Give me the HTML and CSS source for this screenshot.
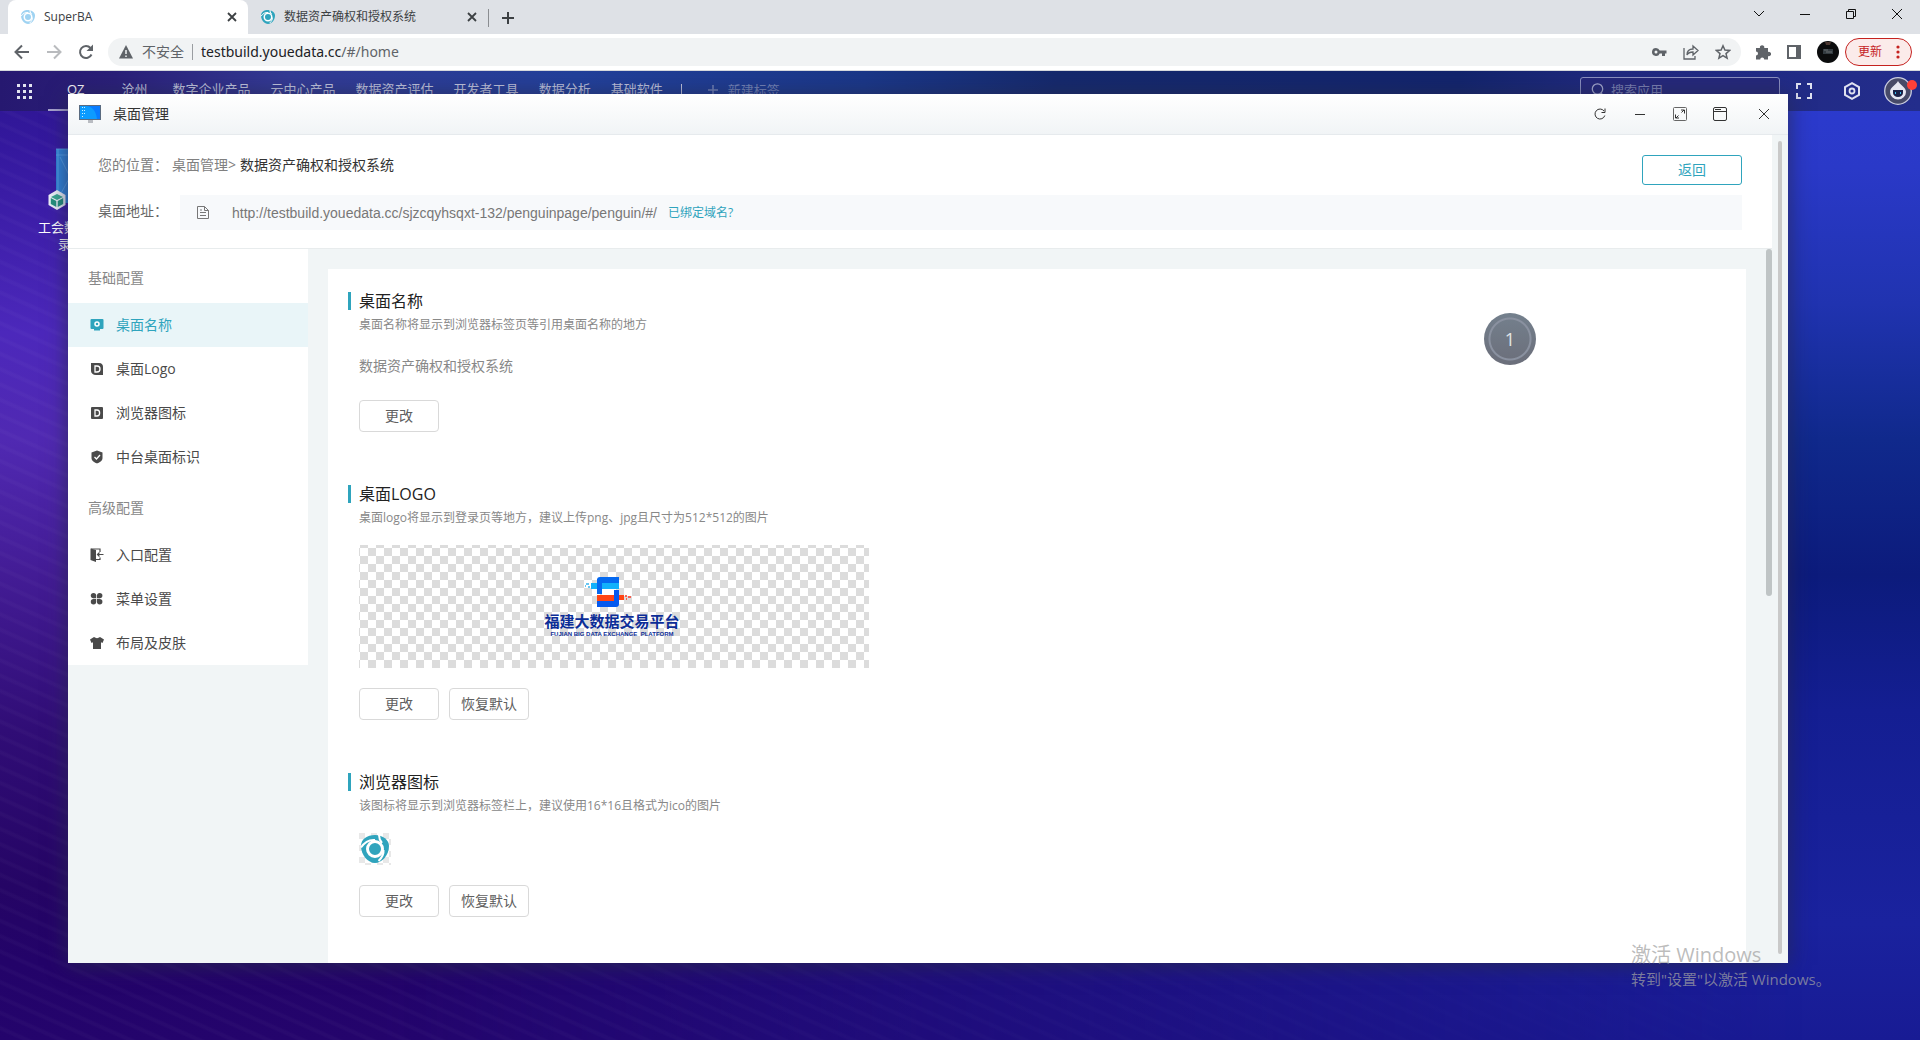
FILE: index.html
```html
<!DOCTYPE html>
<html lang="zh-CN">
<head>
<meta charset="utf-8">
<title>SuperBA</title>
<meta name="viewport" content="width=device-width, initial-scale=1">
<link rel="stylesheet" href="styles.css">
</head>
<body>
<svg class="defs" aria-hidden="true">
  <symbol id="swirl" viewBox="0 0 32 32">
    <path d="M16 2C8 2 2 6 2 13c0 9 7 17 14 17s14-8 14-17C30 7 24 2 16 2z" fill="currentColor"/>
    <path d="M2 14.500c4-6 9-8 14-7.500M20 2c0 3 .5 5 3 8M24.500 17c.5 4-1 7-5 11" fill="none" stroke="#fff" stroke-width="2"/>
    <circle cx="16" cy="16" r="7.500" fill="none" stroke="#fff" stroke-width="3"/>
  </symbol>
  <symbol id="cross" viewBox="0 0 12 12"><path d="M1 1l10 10M11 1L1 11" fill="none" stroke="currentColor"/></symbol>
  <symbol id="cross-bold" viewBox="0 0 10 10"><path d="M1 1l8 8M9 1L1 9" fill="none" stroke="currentColor" stroke-width="1.800"/></symbol>
</svg>

<header class="browser">
  <div class="tabs">
    <div class="tab tab-active">
      <svg class="fav fav-pale"><use href="#swirl"/></svg>
      <span class="tab-title">SuperBA</span>
      <button class="bare tab-close" aria-label="关闭标签页"><svg width="10" height="10"><use href="#cross-bold"/></svg></button>
    </div>
    <div class="tab">
      <svg class="fav"><use href="#swirl"/></svg>
      <span class="tab-title">数据资产确权和授权系统</span>
      <button class="bare tab-close" aria-label="关闭标签页"><svg width="10" height="10"><use href="#cross-bold"/></svg></button>
    </div>
    <button class="bare new-tab" aria-label="新标签页"><svg width="12" height="12" viewBox="0 0 12 12"><path d="M6 0v12M0 6h12" stroke="currentColor" stroke-width="2"/></svg></button>
    <div class="win-controls">
      <button class="bare" aria-label="标签页搜索"><svg width="12" height="12" viewBox="0 0 12 12"><path d="M1 3l5 5 5-5" fill="none" stroke="currentColor"/></svg></button>
      <button class="bare" aria-label="最小化"><svg width="10" height="10" viewBox="0 0 10 10"><path d="M0 5.500h10" stroke="currentColor"/></svg></button>
      <button class="bare" aria-label="还原"><svg width="10" height="10" viewBox="0 0 10 10"><path d="M.5 2.500h7v7h-7zM2.500 2.500v-2h7v7h-2" fill="none" stroke="currentColor"/></svg></button>
      <button class="bare" aria-label="关闭"><svg width="12" height="12"><use href="#cross"/></svg></button>
    </div>
  </div>
  <div class="toolbar">
    <button class="bare tool" aria-label="后退"><svg width="16" height="16" viewBox="0 0 16 16"><path d="M15 8H2M8 1.500L1.500 8 8 14.500" fill="none" stroke="currentColor" stroke-width="2"/></svg></button>
    <button class="bare tool tool-off" aria-label="前进"><svg width="16" height="16" viewBox="0 0 16 16"><path d="M1 8h13M8 1.500L14.500 8 8 14.500" fill="none" stroke="currentColor" stroke-width="2"/></svg></button>
    <button class="bare tool" aria-label="重新加载"><svg width="16" height="16" viewBox="0 0 16 16"><path d="M13.500 10.500A6 6 0 1 1 12.500 4" fill="none" stroke="currentColor" stroke-width="2"/><path d="M15 .5V7H8.500z" fill="currentColor"/></svg></button>
    <div class="omnibox">
      <svg width="14" height="14" viewBox="0 0 14 14"><path d="M7 0l7 13.500H0z" fill="#5f6368"/><path d="M7 5v4M7 10.500v1.500" stroke="#f1f3f4" stroke-width="1.500"/></svg>
      <span class="insecure">不安全</span>
      <div class="url" role="textbox" aria-label="地址栏">testbuild.youedata.cc<span>/#/home</span></div>
      <button class="bare omni-btn" aria-label="密码"><svg width="16" height="16" viewBox="0 0 16 16"><path d="M5 4a4 4 0 1 0 3.700 5.500H11V12h3V9.500h1.500v-3H8.700A4 4 0 0 0 5 4zm0 2.500a1.500 1.500 0 1 1 0 3 1.500 1.500 0 0 1 0-3z" fill="currentColor"/></svg></button>
      <button class="bare omni-btn" aria-label="分享"><svg width="16" height="16" viewBox="0 0 16 16"><path d="M1 4v11h11v-3M4 11c0-4 2.500-6 6-6V2l5 4.500L10 11V8c-3 0-5 1-6 3z" fill="none" stroke="currentColor" stroke-width="1.300"/></svg></button>
      <button class="bare omni-btn" aria-label="收藏"><svg width="16" height="16" viewBox="0 0 16 16"><path d="M8 1.800l1.900 4.300 4.700.4-3.600 3.100 1.100 4.600L8 11.700l-4.100 2.500L5 9.600 1.400 6.500l4.700-.4z" fill="none" stroke="currentColor" stroke-width="1.500"/></svg></button>
    </div>
    <div class="ext">
      <button class="bare" aria-label="扩展程序"><svg width="16" height="16" viewBox="0 0 16 16"><path d="M1 4h4a2.200 2.200 0 1 1 4.200 0H13v4a2.200 2.200 0 1 1 0 4v3.500H9.200a2 2 0 1 0-4 0H1v-4a2 2 0 1 0 0-4z" fill="currentColor"/></svg></button>
      <button class="bare" aria-label="侧边栏"><svg width="14" height="14" viewBox="0 0 14 14"><path d="M1 1h12v12H1z" fill="none" stroke="currentColor" stroke-width="2"/><path d="M9 0h5v14H9z" fill="currentColor"/></svg></button>
      <button class="bare" aria-label="个人资料"><svg width="22" height="22" viewBox="0 0 22 22"><circle cx="11" cy="11" r="11" fill="#0b0c0d"/><path d="M8 1h6l-1 3H9z" fill="#4a3630"/><path d="M6 8h10v5H6z" fill="#333b40"/><path d="M7 9h4M9 11h6" stroke="#6a6f70"/></svg></button>
      <button class="update">更新<svg width="4" height="14" viewBox="0 0 4 14"><circle cx="2" cy="2" r="1.600"/><circle cx="2" cy="7" r="1.600"/><circle cx="2" cy="12" r="1.600"/></svg></button>
    </div>
  </div>
</header>

<main class="desktop">
  <header class="appbar">
    <button class="bare apps" aria-label="全部应用"><svg width="15" height="15" viewBox="0 0 15 15"><path d="M0 0h3v3H0zM6 0h3v3H6zM12 0h3v3h-3zM0 6h3v3H0zM6 6h3v3H6zM12 6h3v3h-3zM0 12h3v3H0zM6 12h3v3H6zM12 12h3v3h-3z" fill="#e3e4f0"/></svg></button>
    <nav class="appnav">
      <a class="current" href="#">OZ</a>
      <a href="#">沧州</a>
      <a href="#">数字企业产品</a>
      <a href="#">云中心产品</a>
      <a href="#">数据资产评估</a>
      <a href="#">开发者工具</a>
      <a href="#">数据分析</a>
      <a href="#">基础软件</a>
      <button class="bare add-tag"><svg width="10" height="10" viewBox="0 0 10 10"><path d="M5 0v10M0 5h10" stroke="currentColor" stroke-width="1.500"/></svg>新建标签</button>
    </nav>
    <label class="search">
      <svg width="13" height="14" viewBox="0 0 13 14"><circle cx="6.500" cy="6" r="5.200" fill="none" stroke="#a9aed2" stroke-width="1.300"/><path d="M10 10l2.500 3" stroke="#a9aed2" stroke-width="1.300"/></svg>
      <input type="text" placeholder="搜索应用" aria-label="搜索应用">
    </label>
    <div class="appicons">
      <button class="bare" aria-label="全屏"><svg width="16" height="16" viewBox="0 0 16 16"><path d="M1 6V1h4M11 1h4v5M15 10v5h-4M5 15H1v-5" fill="none" stroke="currentColor" stroke-width="2"/></svg></button>
      <button class="bare" aria-label="设置"><svg width="18" height="18" viewBox="0 0 18 18"><path d="M9 1.200l7 3.900v7.800l-7 3.900-7-3.900V5.100z" fill="none" stroke="currentColor" stroke-width="2"/><circle cx="9" cy="9" r="2.500" fill="none" stroke="currentColor" stroke-width="1.800"/></svg></button>
      <button class="bare avatar" aria-label="用户"><svg width="28" height="28" viewBox="0 0 28 28"><circle cx="14" cy="14" r="13.300" fill="#474a68" stroke="#c9cce0" stroke-width="1.300"/><path d="M14 4c2 4 8 6 8 11a8 7.500 0 0 1-16 0C6 10 12 8 14 4z" fill="#e6e7f2"/><path d="M9 13h10v3a5 4 0 0 1-10 0z" fill="#1a2148"/><path d="M11.500 15v2M16.500 15v2" stroke="#36b8e8"/></svg></button>
    </div>
  </header>

  <a class="shortcut" href="#">
    <svg width="60" height="64" viewBox="0 0 60 64"><path d="M14 2h44v54H14z" fill="#2f83d8"/><path d="M14 2h44M16 2v54M14 8h44M18 10l10 20-10 18" fill="none" stroke="#5aa5e8" stroke-width=".8"/><path d="M15 43l8.500 5v10L15 63l-8.500-5V48z" fill="#edf1f8"/><path d="M15 47l6 3-6 3-6-3z" fill="#3aa890"/><path d="M8.800 51l5.500 3v6l-5.500-3zM21.200 51l-5.500 3v6l5.500-3z" fill="#25917c"/></svg>
    <span>工会数</span>
    <span class="second">录</span>
  </a>

  <section class="window">
    <header class="titlebar">
      <svg width="22" height="18" viewBox="0 0 22 18"><path d="M9 14h5v4H9z" fill="#b9bcc2"/><path d="M0 0h22v15H0z" fill="#5a6b80"/><path d="M1 1h20v13H1z" fill="#087bff"/><path d="M1 1h6c6 0 10 5 11 13H1z" fill="#0c9bff"/><path d="M3 2h1v1H3zM5 2h1v1H5zM3 5h1v1H3zM5 5h1v1H5zM3 8h1v1H3zM5 8h1v1H5zM3 11h1v1H3z" fill="#c8f1ff"/></svg>
      <h1>桌面管理</h1>
      <button class="bare" aria-label="刷新"><svg width="12" height="12" viewBox="0 0 12 12"><path d="M10.800 7.500A5 5 0 1 1 10 3" fill="none" stroke="currentColor"/><path d="M11 .5v4H7.500" fill="none" stroke="currentColor"/></svg></button>
      <button class="bare" aria-label="最小化"><svg width="10" height="10" viewBox="0 0 10 10"><path d="M0 5.500h10" stroke="currentColor"/></svg></button>
      <button class="bare" aria-label="全屏"><svg width="14" height="14" viewBox="0 0 14 14"><rect x=".5" y=".5" width="13" height="13" rx="1" fill="none" stroke="#666"/><path d="M8 3h3.500v3.500M11 3L8.500 5.500M2.500 7.500V11H6M3 11l2.500-2.500" fill="none" stroke="currentColor"/></svg></button>
      <button class="bare" aria-label="最大化"><svg width="14" height="14" viewBox="0 0 14 14"><rect x=".5" y=".5" width="13" height="13" rx="1.500" fill="none" stroke="currentColor"/><path d="M1 4.500h12M2 2.500h6" stroke="currentColor"/></svg></button>
      <button class="bare close" aria-label="关闭"><svg width="12" height="12"><use href="#cross"/></svg></button>
    </header>
    <div class="window-body">
      <div class="page">
        <header class="page-head">
          <div class="row row-top">
            <span class="label">您的位置：</span>
            <a class="crumb" href="#">桌面管理&gt;</a>
            <span class="here">数据资产确权和授权系统</span>
            <button class="back">返回</button>
          </div>
          <div class="row">
            <span class="label dark">桌面地址：</span>
            <div class="address">
              <svg width="12" height="13" viewBox="0 0 12 13"><path d="M.5.500h7l4 4v8H.5zM7.500.500v4h4M3 6.500h6M3 9.500h6M3 4h2" fill="none" stroke="currentColor"/></svg>
              <span class="address-url">http://testbuild.youedata.cc/sjzcqyhsqxt-132/penguinpage/penguin/#/</span>
              <a href="#">已绑定域名?</a>
            </div>
          </div>
        </header>
        <div class="columns">
          <nav class="side">
            <h2>基础配置</h2>
            <a class="on" href="#"><svg viewBox="0 0 14 14"><path d="M1.500 1h11a1 1 0 0 1 1 1v8a1 1 0 0 1-1 1H10v1.500H4V11H1.500a1 1 0 0 1-1-1V2a1 1 0 0 1 1-1z" fill="currentColor"/><circle cx="7" cy="6" r="2" fill="none" stroke="#fff" stroke-width="1.500"/></svg>桌面名称</a>
            <a href="#"><svg viewBox="0 0 14 14"><path d="M1 1h8c3 0 4 2 4 4v8H6c-3 0-5-2-5-4z" fill="currentColor"/><path d="M5 4h2c4 0 4 6 0 6H5z" fill="none" stroke="#fff" stroke-width="1.300"/></svg>桌面Logo</a>
            <a href="#"><svg viewBox="0 0 14 14"><rect x="1" y="1" width="12" height="12" rx="1" fill="currentColor"/><path d="M5 4h2c3.500 0 3.500 6 0 6H5z" fill="none" stroke="#fff" stroke-width="1.300"/></svg>浏览器图标</a>
            <a href="#"><svg viewBox="0 0 14 14"><path d="M7 .5l5.500 2V8c0 3-3 4.500-5.500 5.500C4.500 12.500 1.500 11 1.500 8V2.500z" fill="currentColor"/><path d="M4.500 7l2 2 3.500-4" fill="none" stroke="#fff" stroke-width="1.300"/></svg>中台桌面标识</a>
            <h2>高级配置</h2>
            <a href="#"><svg viewBox="0 0 14 14"><path d="M.5.500L6 2v12L.5 12z" fill="currentColor"/><path d="M1 1h9v3M10 9.500v2H6M13.500 6.500H7.500M9.500 4.500l-2 2 2 2" fill="none" stroke="currentColor" stroke-width="1.200"/></svg>入口配置</a>
            <a href="#"><svg viewBox="0 0 14 14"><circle cx="3.500" cy="3.600" r="2.700" fill="currentColor"/><circle cx="9.700" cy="3.600" r="2.700" fill="currentColor"/><circle cx="3.500" cy="9.800" r="2.700" fill="currentColor"/><circle cx="9.700" cy="9.800" r="2.700" fill="currentColor"/><path d="M3.500 3.600h2.700v2.700H3.500zM7 3.600h2.700v2.700H7zM3.500 7.100h2.700v2.700H3.500zM7 7.100h2.700v2.700H7z" fill="currentColor"/></svg>菜单设置</a>
            <a href="#"><svg viewBox="0 0 14 14"><path d="M4 1c2 1.500 4 1.500 6 0l4 2.500L12.500 7 11 6.300V13H3V6.300L1.500 7 0 3.500z" fill="currentColor"/></svg>布局及皮肤</a>
          </nav>
          <div class="card">
            <section class="setting">
              <h3>桌面名称</h3>
              <p class="hint">桌面名称将显示到浏览器标签页等引用桌面名称的地方</p>
              <p class="value">数据资产确权和授权系统</p>
              <div class="actions"><button class="btn">更改</button></div>
            </section>
            <section class="setting">
              <h3>桌面LOGO</h3>
              <p class="hint">桌面logo将显示到登录页等地方，建议上传png、jpg且尺寸为512*512的图片</p>
              <div class="logo-box">
                <svg width="48" height="32" viewBox="0 0 48 32"><path d="M13 4a3 3 0 0 1 3-3h19v6H13z" fill="#0569f0"/><path d="M13 3h5v15h-5z" fill="#0569f0"/><path d="M7 7h28v6H18V7h-5v6H7z" fill="#12b1fb"/><path d="M18 13h12v6H18z" fill="#fff"/><path d="M13 19h17v6H13zM35 19h5v5h-5z" fill="#ff4514"/><path d="M30 14h5v14a3 3 0 0 1-3 3H13v-6h17z" fill="#0459ee"/><path d="M2 8h3M4 11h2M1 10h1" stroke="#37b4ee" stroke-width="1.500"/><path d="M41 20h2M42 23h1M44 21h3" stroke="#ff3520" stroke-width="1.500"/></svg>
                <strong>福建大数据交易平台</strong>
                <small>FUJIAN BIG DATA EXCHANGE &nbsp;PLATFORM</small>
              </div>
              <div class="actions"><button class="btn">更改</button><button class="btn">恢复默认</button></div>
            </section>
            <section class="setting">
              <h3>浏览器图标</h3>
              <p class="hint">该图标将显示到浏览器标签栏上，建议使用16*16且格式为ico的图片</p>
              <div class="ico-box"><svg><use href="#swirl"/></svg></div>
              <div class="actions"><button class="btn">更改</button><button class="btn">恢复默认</button></div>
            </section>
            <button class="step">1</button>
          </div>
          <div class="thumb"></div>
        </div>
      </div>
      <div class="gutter"><div></div></div>
    </div>
  </section>

  <aside class="activate">
    <p class="activate-title">激活 Windows</p>
    <p>转到"设置"以激活 Windows。</p>
  </aside>
</main>
</body>
</html>
```

FILE: styles.css
```css
* { box-sizing: border-box; }

:root {
  --teal: #2fa4bd;
  --mist: #f1f5f6;
}

body {
  margin: 0;
  height: 100vh;
  display: flex;
  flex-direction: column;
  overflow: hidden;
  font: 14px/20px "Open Sans", "Noto Sans CJK SC", sans-serif;
  color: #4a4a4a;
}

h1, h2, h3, p { margin: 0; font-weight: 400; }
a { color: inherit; text-decoration: none; }
svg { display: block; flex: none; }
button, input { font: inherit; color: inherit; }
.defs { position: absolute; width: 0; height: 0; }

.bare {
  display: flex;
  align-items: center;
  justify-content: center;
  padding: 0;
  border: 0;
  background: none;
}

/* Browser frame */
.browser { flex: none; background: #dee1e6; color: #5f6368; }

.tabs { display: flex; height: 34px; padding-left: 8px; }

.tab {
  display: flex;
  align-items: center;
  gap: 8px;
  width: 240px;
  padding: 0 10px 0 12px;
  font-size: 12px;
  color: #3c4043;
}

.tab-active { background: #fff; border-radius: 8px 8px 0 0; }
.tab-title { flex: 1; }
.fav { width: 16px; height: 16px; color: var(--teal); }
.fav-pale { color: #9fd3f2; }
.tab-close { width: 12px; height: 12px; }
.new-tab { width: 42px; height: 18px; margin: 9px 0; padding-right: 3px; border-left: 1px solid #8a8d91; color: #3c4043; }

.win-controls { display: flex; margin-left: auto; color: #111; }
.win-controls button { width: 46px; height: 28px; }

.toolbar {
  display: flex;
  align-items: center;
  height: 37px;
  padding: 0 8px 0 6px;
  background: #fff;
  border-bottom: 1px solid #d5d8dc;
}

.tool { width: 32px; height: 28px; }
.tool-off { color: #b9bbbe; }

.omnibox {
  flex: 1;
  display: flex;
  align-items: center;
  height: 28px;
  margin-left: 6px;
  padding: 0 10px 0 11px;
  border-radius: 14px;
  background: #f1f3f4;
}

.insecure { padding: 0 8px 0 9px; border-right: 1px solid #9a9da1; line-height: 16px; }
.url { flex: 1; padding-left: 8px; font-family: "Noto Sans", sans-serif; color: #202124; }
.url span { color: #5f6368; }
.omni-btn { width: 16px; height: 16px; margin-left: 16px; }

.ext { display: flex; align-items: center; gap: 16px; padding-left: 14px; }
.ext .update {
  display: flex;
  align-items: center;
  justify-content: space-between;
  width: 67px;
  height: 28px;
  margin-left: -10px;
  padding: 0 11px 0 12px;
  border: 1px solid #c5221f;
  border-radius: 14px;
  background: #fbebea;
  color: #c5221f;
  font-size: 12px;
}
.update svg { fill: #c5221f; }

/* Desktop */
.desktop {
  position: relative;
  flex: 1;
  min-height: 0;
  overflow: hidden;
  background: linear-gradient(180deg, #2c3bd0 0, #2a39c8 10%, #2033b0 24%, #10298c 38%, #0c1b7c 52%, #141e92 66%, #1a229e 88%, #181b94 100%);
}

.desktop::before {
  content: "";
  position: absolute;
  inset: 0;
  background:
    repeating-linear-gradient(24deg, #ffffff00 0 8px, #ffffff06 10px 12px, #ffffff00 14px),
    linear-gradient(180deg, #2c1690 0, #34189e 8%, #4c28bb 27%, #5029b2 38%, #431c95 52%, #300d76 68%, #250565 84%, #230369 92%, #24046c 100%);
  -webkit-mask-image: linear-gradient(90deg, #000 20%, transparent 94%);
  mask-image: linear-gradient(90deg, #000 20%, transparent 94%);
}

.appbar {
  position: relative;
  display: flex;
  align-items: center;
  height: 40px;
  padding: 0 8px 0 17px;
  color: #c3c7df;
  font-size: 13px;
  background: linear-gradient(90deg, #261870 0, #2a1f78 6%, #333a94 15%, #22409a 30%, #1a3788 45%, #15296c 55%, #12246c 76%, #20297f 84%, #232d8c 100%);
}

.appnav { display: flex; align-items: center; gap: 20px; height: 40px; margin-left: 16px; }
.appnav a { min-width: 36px; height: 40px; line-height: 37px; text-align: center; }
.appnav .current { padding: 0 12px 0 19px; border-bottom: 2px solid #a9a4ce; color: #fff; }
.appnav .add-tag {
  gap: 10px;
  height: 14px;
  margin-left: -2px;
  padding: 0 0 2px 26px;
  border-left: 1px solid #c3c7df;
  color: #7484b8;
}

.search {
  display: flex;
  align-items: center;
  gap: 7px;
  width: 200px;
  height: 28px;
  margin-left: auto;
  padding: 0 11px 2px 10px;
  border: 1px solid #8b90c0;
  border-radius: 3px;
  background: #25287a;
}
.search input { width: 100%; padding: 0; border: 0; outline: 0; background: none; }
.search input::placeholder { color: #7d82b4; opacity: 1; }

.appicons { display: flex; align-items: center; padding-left: 16px; color: #dfe1f0; }
.appicons button + button { margin-left: 31px; }
.appicons button + .avatar { position: relative; margin-left: 23px; }
.avatar::after {
  content: "";
  position: absolute;
  right: -5px;
  top: 3px;
  width: 10px;
  height: 10px;
  border-radius: 50%;
  background: #ff4038;
}

.shortcut {
  position: absolute;
  left: 38px;
  top: 76px;
  width: 84px;
  color: #fff;
  font-size: 13px;
  line-height: 17px;
}
.shortcut svg { margin: 0 4px 8px; }
.shortcut span { display: block; white-space: nowrap; }
.shortcut .second { padding-left: 20px; }

/* Application window */
.window {
  position: absolute;
  left: 68px;
  right: 132px;
  top: 23px;
  bottom: 77px;
  display: flex;
  flex-direction: column;
  background: #fff;
  box-shadow: 0 2px 20px #282a4ecc;
}

.titlebar {
  flex: none;
  display: flex;
  align-items: center;
  height: 41px;
  padding: 0 8px 0 11px;
  color: #333;
  background: linear-gradient(#fff, #f1f4f6);
  border-bottom: 1px solid #e6eaed;
}
.titlebar h1 { flex: 1; padding-left: 12px; font-size: 14px; }
.titlebar button { width: 40px; height: 32px; }
.titlebar .close { width: 32px; margin-left: 8px; }

.window-body { flex: 1; display: flex; min-height: 0; }
.page { flex: 1; display: flex; flex-direction: column; min-width: 0; }

.gutter { width: 16px; padding: 6px 6px 9px; background: var(--mist); }
.gutter div { height: 100%; border-radius: 2px; background: #c9c9c9; }

.page-head {
  flex: none;
  display: flex;
  flex-direction: column;
  gap: 10px;
  padding: 20px 30px 18px;
  border-bottom: 1px solid #e8eced;
}
.row { display: flex; align-items: center; color: #808080; }
.row-top { align-items: flex-start; }
.label { width: 74px; white-space: nowrap; }
.label.dark { width: 82px; padding-bottom: 4px; color: #666; }
.here { flex: 1; padding-left: 4px; color: #333; }
.back {
  width: 100px;
  height: 30px;
  padding: 0;
  border: 1px solid var(--teal);
  border-radius: 3px;
  background: #fff;
  color: var(--teal);
}
.address {
  flex: 1;
  display: flex;
  align-items: center;
  height: 35px;
  padding-left: 17px;
  background: #f7f9fb;
  color: #777;
}
.address-url { padding: 0 11px 0 23px; font-family: "Liberation Sans", Arial, sans-serif; }
.address a { color: var(--teal); font-size: 12px; }

.columns {
  position: relative;
  flex: 1;
  display: flex;
  align-items: flex-start;
  min-height: 0;
  overflow: hidden;
  background: var(--mist);
}
.thumb {
  position: absolute;
  right: 0;
  top: 0;
  width: 6px;
  height: 347px;
  border-radius: 3px;
  background: #bfc4c5;
}

.side { flex: none; width: 240px; background: #fff; }
.side h2 { padding: 19px 20px 15px; font-size: 14px; line-height: 20px; color: #888; }
.side a { display: flex; align-items: center; gap: 12px; height: 44px; padding-left: 22px; }
.side a.on { background: #e9f5f8; color: var(--teal); }
.side svg { width: 14px; height: 14px; }

.card {
  position: relative;
  flex: 1;
  display: flex;
  flex-direction: column;
  gap: 53px;
  margin: 20px 26px 0 20px;
  padding: 23px 20px 53px;
  background: #fff;
}
.setting { padding-left: 11px; }
.setting h3 {
  margin-left: -11px;
  padding-left: 8px;
  border-left: 3px solid var(--teal);
  font-size: 16px;
  line-height: 18px;
  color: #222;
}
.hint { margin: 6px 0 18px; font-size: 12px; line-height: 18px; color: #888; }
.value { line-height: 28px; color: #888; }
.actions { display: flex; gap: 10px; margin-top: 20px; }
.btn {
  width: 80px;
  height: 32px;
  padding: 0;
  border: 1px solid #d9d9d9;
  border-radius: 4px;
  background: #fff;
  color: #606060;
}

.logo-box {
  display: flex;
  flex-direction: column;
  align-items: center;
  width: 510px;
  height: 123px;
  padding: 31px 4px 0 0;
  background: conic-gradient(#dcdcdc 25%, #fff 0 50%, #dcdcdc 0 75%, #fff 0) 1px 3px / 16px 16px;
  color: #0c2d97;
}
.logo-box svg { margin-right: 8px; }
.logo-box strong { margin-top: 4px; font-size: 15px; line-height: 18px; }
.logo-box small { font: 700 6px/8px "Liberation Sans", Arial, sans-serif; }

.ico-box {
  width: 32px;
  height: 32px;
  background: conic-gradient(#e8e8e8 25%, #fff 0 50%, #e8e8e8 0 75%, #fff 0) 6px 0 / 12px 12px;
}
.ico-box svg { width: 32px; height: 32px; color: var(--teal); }

.step {
  position: absolute;
  right: 210px;
  top: 44px;
  width: 52px;
  height: 52px;
  padding: 0;
  border: 0;
  border-radius: 50%;
  background: radial-gradient(circle, transparent 19px, #8a91a0 20px 21px, transparent 22px), linear-gradient(#74808d, #6b6e7a);
  color: #e3e5e8;
  font-size: 18px;
}

.activate {
  position: absolute;
  right: 93px;
  bottom: 49px;
  width: 196px;
  font-size: 15px;
  line-height: 24px;
  white-space: nowrap;
  color: #a2a2a2b8;
  pointer-events: none;
}
.activate-title { font-size: 20px; }
```
